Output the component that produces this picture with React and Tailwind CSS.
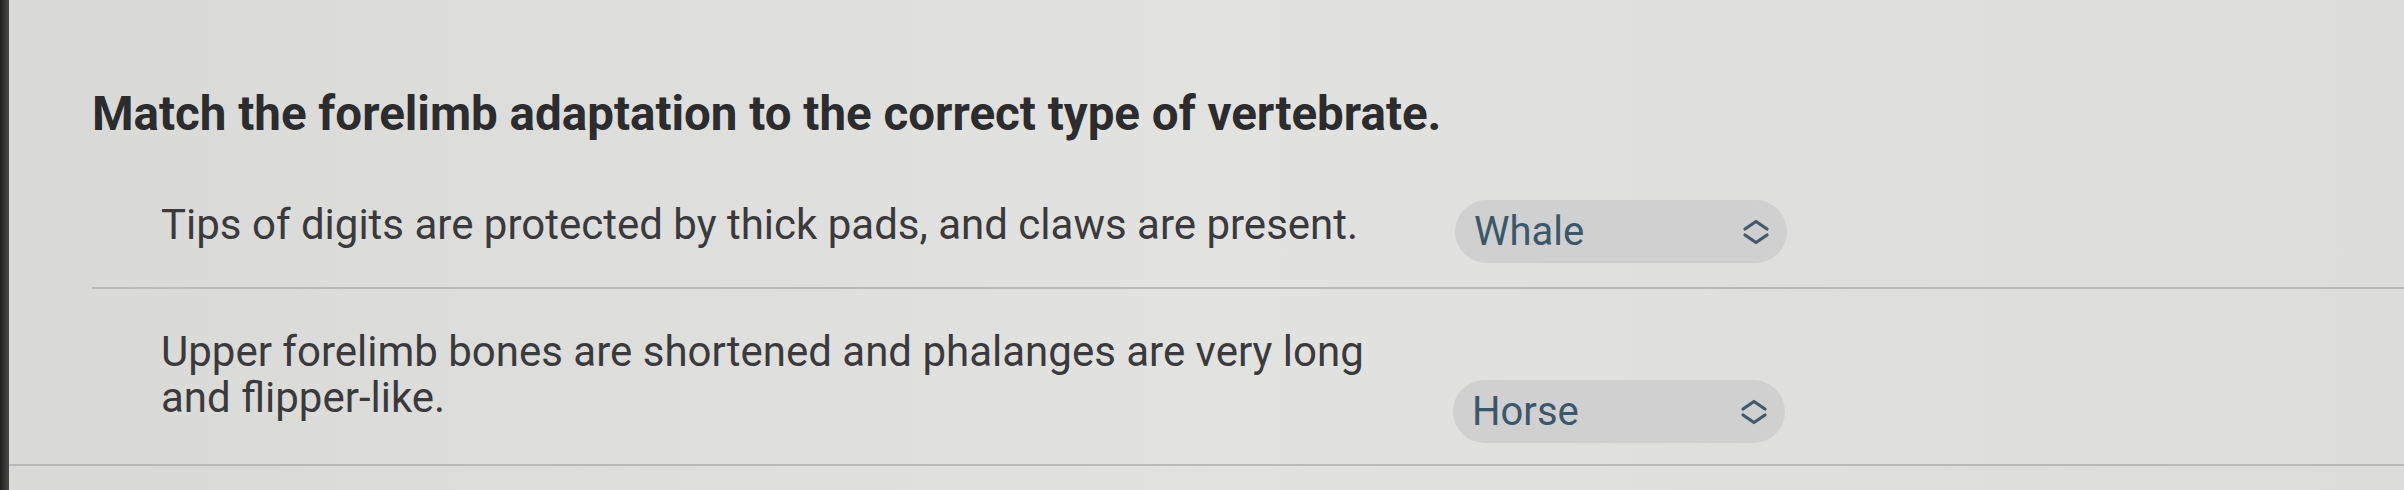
import React from 'react';

function Chevrons() {
  return (
    <svg width="30" height="28" viewBox="0 0 30 28" fill="none" className="text-[#41596a]">
      <path d="M4 11 L15 3.5 L26 11" stroke="currentColor" strokeWidth="3.2" strokeLinecap="round" strokeLinejoin="round" />
      <path d="M4 17 L15 24.5 L26 17" stroke="currentColor" strokeWidth="3.2" strokeLinecap="round" strokeLinejoin="round" />
    </svg>
  );
}

function Select({ value }) {
  return (
    <div className="flex items-center justify-between w-[332px] h-[63px] rounded-full bg-[#cfd0cf] pl-[19px] pr-[16px] shrink-0">
      <span className="text-[40px] text-[#3c5769] leading-none">{value}</span>
      <Chevrons />
    </div>
  );
}

const ROWS = [
  { text: 'Tips of digits are protected by thick pads, and claws are present.', answer: 'Whale' },
  { text: 'Upper forelimb bones are shortened and phalanges are very long and flipper-like.', answer: 'Horse' },
];

export default function App() {
  return (
    <div className="flex w-[2404px] h-[490px] overflow-hidden bg-gradient-to-r from-[#d9d9d8] via-[#e2e2e1] to-[#dcdcdb] font-['Roboto',sans-serif]">
      {/* screen edge */}
      <div className="w-[9px] shrink-0 bg-gradient-to-r from-[#1e1e1e] to-[#4a4a4a]" />

      <div className="flex-1 flex flex-col pt-[86px]">
        <h1 className="pl-[83px] text-[47.5px] font-bold leading-[56px] text-[#2c2c2e]">
          Match the forelimb adaptation to the correct type of vertebrate.
        </h1>

        {/* Row 1 */}
        <div className="ml-[83px] border-b-2 border-[#b9b9b9]">
          <div className="flex items-end pl-[69px] pt-[58px] pb-[24px]">
            <p className="w-[1230px] pb-[15px] text-[42px] leading-[46px] text-[#3a3a3c]">
              {ROWS[0].text}
            </p>
            <div className="ml-[64px]">
              <Select value={ROWS[0].answer} />
            </div>
          </div>
        </div>

        {/* Row 2 */}
        <div className="border-b-2 border-[#b9b9b9]">
          <div className="flex items-end pl-[152px] pt-[40px] pb-[21px]">
            <p className="w-[1230px] pb-[22px] text-[42px] leading-[46px] text-[#3a3a3c]">
              {ROWS[1].text}
            </p>
            <div className="ml-[62px]">
              <Select value={ROWS[1].answer} />
            </div>
          </div>
        </div>
      </div>
    </div>
  );
}
